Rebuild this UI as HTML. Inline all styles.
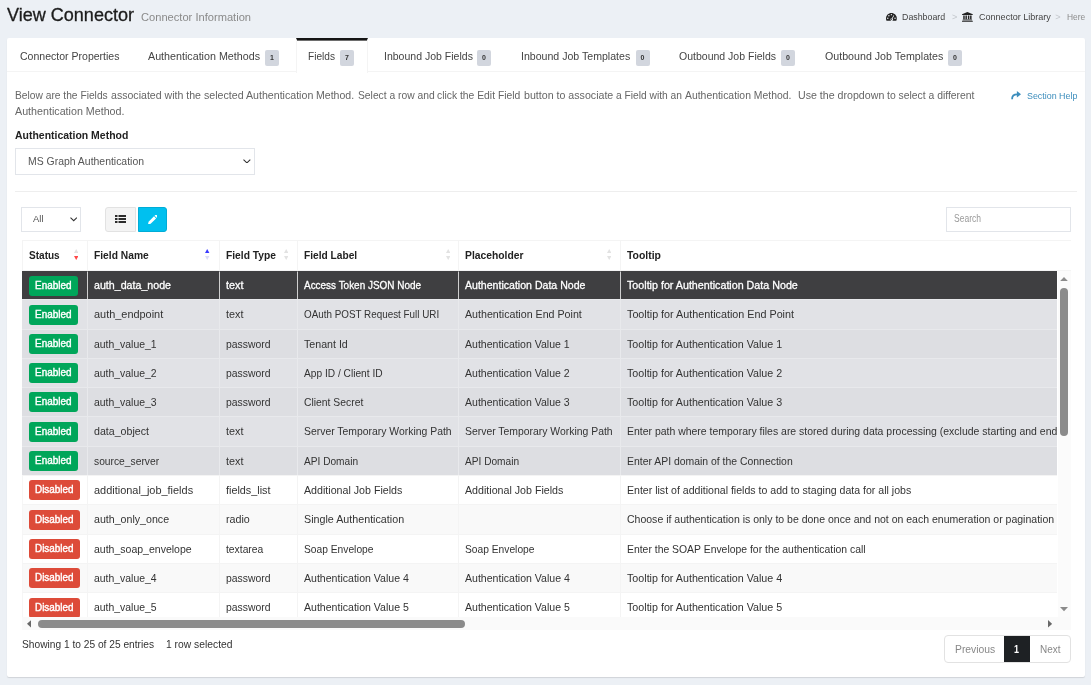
<!DOCTYPE html>
<html lang="en">
<head>
<meta charset="utf-8">
<title>View Connector</title>
<style>
*{box-sizing:border-box}
html,body{margin:0;padding:0}
body{width:1091px;height:685px;overflow:hidden;background:#ecf0f5;font-family:"Liberation Sans",sans-serif;font-size:11.5px;color:#333;position:relative}
.wrap{position:absolute;left:0;top:0;width:1091px;height:685px;will-change:transform}
.f{display:inline-block;transform-origin:0 50%;white-space:nowrap}
.t{position:absolute;line-height:16px;white-space:nowrap;margin:0;font-weight:400}
.card{position:absolute;left:7px;top:38px;width:1078px;height:639px;background:#fff;border-radius:2px;box-shadow:0 1px 1px rgba(0,0,0,.12)}
h1.t{font-size:17.6px;color:#1c1c1c;line-height:24px;-webkit-text-stroke:0.3px #1c1c1c}
.sub{color:#8a8a8a;font-size:11.6px}
.crumb{font-size:9.2px;color:#444}
.crumb .sep{color:#c3c7cc}
.tabline{position:absolute;left:7px;top:71px;width:1078px;height:1px;background:#f4f4f4}
.tabact{position:absolute;left:296px;top:38px;width:72px;height:35px;border-top:2px solid #151515;box-shadow:inset 0 1px 0 #6e6e6e;border-left:1px solid #f4f4f4;border-right:1px solid #f4f4f4;background:#fff}
.tab{color:#444}
.tb{position:absolute;top:50px;width:14px;height:16px;background:#d2d6de;color:#333;font-weight:700;font-size:7px;line-height:16px;text-align:center;border-radius:2px}
.desc{color:#666}
.help{color:#3c8dbc;font-size:9.8px}
.lab{font-weight:700;color:#222}
.box{position:absolute;border:1px solid #e2e5ea;background:#fff}
hr{position:absolute;left:15px;top:191px;width:1062px;height:1px;border:0;background:#eee;margin:0}
.btn{position:absolute;top:207px;height:25px}
.b1{left:105px;width:31px;background:#f4f4f4;border:1px solid #e2e2e2;border-radius:3px 0 0 3px}
.b2{left:138px;width:29px;background:#00c0ef;border:1px solid #00acd6;border-radius:0 3px 3px 0}
.thead{position:absolute;left:22px;top:240px;width:1049px;height:31px;border-top:1px solid #f4f4f4;border-left:1px solid #f4f4f4;border-bottom:1px solid #f4f4f4}
.thead div{position:absolute;top:0;height:29px;line-height:28px;font-weight:700;color:#222;border-right:1px solid #f4f4f4;white-space:nowrap}
.thead div .f{position:absolute;top:0}
.scroll{position:absolute;left:22px;top:271px;width:1035px;height:346px;overflow:hidden}
table{border-collapse:separate;table-layout:fixed;border-spacing:0;width:1420px}
td{padding:0 0 0 6px;white-space:nowrap;overflow:hidden;border-right:1px solid #f4f4f4;border-top:1px solid #f4f4f4;color:#333;vertical-align:middle;line-height:16px}
td:first-child{padding-left:7px}
tr.odd td:first-child,tr.even td:first-child{border-left:1px solid #f6f6f6;padding-left:6px}
td .f{position:relative;top:-0.5px}
tr.sel td{background:#3f3f41;color:#fff;-webkit-text-stroke:0.3px #fff;border-right-color:#d0d0d0;border-top-color:#3f3f41}
tr.en1 td{background:#e1e2e6;border-right-color:#e8e9ec;border-top-color:#e8e9ec}
tr.en2 td{background:#dddee2;border-right-color:#e8e9ec;border-top-color:#e8e9ec}
tr.odd td{background:#f9f9f9}
tr.even td{background:#fff}
.badge{position:relative;top:0;display:inline-block;width:49px;height:20px;line-height:20px;border-radius:3px;color:#fff;text-align:left;padding-left:6px;vertical-align:middle}
.badge .f{top:-1px;-webkit-text-stroke:0.4px #fff}
.bg-g{background:#00a65a}.bg-r{background:#dd4b39;width:51px}
.vsb{position:absolute;left:1058px;top:271px;width:13px;height:346px;background:#fbfbfb}
.hsb{position:absolute;left:22px;top:617px;width:1049px;height:13px;background:#fafafa}
.thumb{position:absolute;background:#8b8b8b;border-radius:4px}
.pag{position:absolute;left:944px;top:635px;height:28px;width:127px;border:1px solid #e2e2e2;border-radius:4px;background:#fff}
.pag .cur{position:absolute;left:59px;top:0;width:26px;height:26px;background:#1e2124}
svg{position:absolute;display:block}
</style>
</head>
<body>
<div class="wrap">
<h1 class="t" style="left:7px;top:3px"><span class="f" style="transform:scaleX(1.0251);font-size:17.6px;">View Connector</span></h1>
<div class="t sub" style="left:141px;top:9px"><span class="f" style="transform:scaleX(0.9589);font-size:11.6px;">Connector Information</span></div>
<div class="t crumb" style="left:902.4px;top:9px"><span class="f" style="transform:scaleX(0.9610);font-size:9.2px;">Dashboard</span></div>
<div class="t crumb" style="left:952px;top:9px"><span class="sep">&gt;</span></div>
<div class="t crumb" style="left:979.4px;top:9px"><span class="f" style="transform:scaleX(0.9845);font-size:9.2px;">Connector Library</span></div>
<div class="t crumb" style="left:1055.3px;top:9px"><span class="sep">&gt;</span></div>
<div class="t crumb" style="left:1066.5px;top:9px;color:#8c8c8c"><span class="f" style="transform:scaleX(0.9136);font-size:9.2px;">Here</span></div>
<div class="card"></div>
<div class="tabline"></div>
<div class="tabact"></div>
<div class="t tab" style="left:19.5px;top:48px"><span class="f" style="transform:scaleX(0.9156);">Connector Properties</span></div>
<div class="t tab" style="left:148px;top:48px"><span class="f" style="transform:scaleX(0.9318);">Authentication Methods</span></div><span class="tb" style="left:265px">1</span>
<div class="t tab" style="left:308.3px;top:48px"><span class="f" style="transform:scaleX(0.8798);">Fields</span></div><span class="tb" style="left:340px">7</span>
<div class="t tab" style="left:383.7px;top:48px"><span class="f" style="transform:scaleX(0.9147);">Inbound Job Fields</span></div><span class="tb" style="left:477px">0</span>
<div class="t tab" style="left:521.2px;top:48px"><span class="f" style="transform:scaleX(0.9198);">Inbound Job Templates</span></div><span class="tb" style="left:635.5px">0</span>
<div class="t tab" style="left:679.1px;top:48px"><span class="f" style="transform:scaleX(0.9140);">Outbound Job Fields</span></div><span class="tb" style="left:781px">0</span>
<div class="t tab" style="left:824.5px;top:48px"><span class="f" style="transform:scaleX(0.9267);">Outbound Job Templates</span></div><span class="tb" style="left:948px">0</span>
<p class="t desc" style="left:0;top:87px;width:1000px;height:16px"><span style="position:absolute;left:15.4px;top:0"><span class="f" style="transform:scaleX(0.8896);">Below are the Fields</span></span> <span style="position:absolute;left:111px;top:0"><span class="f" style="transform:scaleX(0.9201);">associated with the</span></span> <span style="position:absolute;left:203.9px;top:0"><span class="f" style="transform:scaleX(0.9241);">selected Authentication</span></span> <span style="position:absolute;left:316.1px;top:0"><span class="f" style="transform:scaleX(0.9167);">Method.</span></span> <span style="position:absolute;left:357.8px;top:0"><span class="f" style="transform:scaleX(0.8953);">Select a row and</span></span> <span style="position:absolute;left:437.4px;top:0"><span class="f" style="transform:scaleX(0.8987);">click the Edit Field</span></span> <span style="position:absolute;left:523.6px;top:0"><span class="f" style="transform:scaleX(0.9249);">button to associate</span></span> <span style="position:absolute;left:615.8px;top:0"><span class="f" style="transform:scaleX(0.8900);">a Field with an</span></span> <span style="position:absolute;left:684.7px;top:0"><span class="f" style="transform:scaleX(0.9044);">Authentication Method.</span></span> <span style="position:absolute;left:797.6px;top:0"><span class="f" style="transform:scaleX(0.9245);">Use the dropdown</span></span> <span style="position:absolute;left:886.8px;top:0"><span class="f" style="transform:scaleX(0.9024);">to select a different</span></span></p>
<p class="t desc" style="left:15px;top:103px"><span class="f" style="transform:scaleX(0.9308);">Authentication Method.</span></p>
<a class="t help" style="left:1026.6px;top:88px"><span class="f" style="transform:scaleX(0.9071);font-size:9.8px;">Section Help</span></a>
<label class="t lab" style="left:15px;top:127px"><span class="f" style="transform:scaleX(0.9095);font-weight:700;">Authentication Method</span></label>
<div class="box" style="left:15px;top:148px;width:240px;height:27px"></div>
<div class="t" style="left:28.2px;top:152.8px;color:#555"><span class="f" style="transform:scaleX(0.9072);">MS Graph Authentication</span></div>
<hr>
<div class="box" style="left:21px;top:207px;width:60px;height:25px"></div>
<div class="t" style="left:32.5px;top:210.7px;color:#555;font-size:9.4px"><span class="f" style="transform:scaleX(1.0075);font-size:9.4px;">All</span></div>
<div class="btn b1"></div>
<div class="btn b2"></div>
<div class="box" style="left:946px;top:207px;width:125px;height:25px"></div>
<div class="t" style="left:954.4px;top:211px;color:#9a9a9a;font-size:10px"><span class="f" style="transform:scaleX(0.8521);font-size:10.0px;">Search</span></div>
<div class="thead">
  <div style="left:0;width:65px"><span style="position:absolute;left:5.5px"><span class="f" style="transform:scaleX(0.8732);font-weight:700;">Status</span></span></div>
  <div style="left:65px;width:132px"><span style="position:absolute;left:5.7px"><span class="f" style="transform:scaleX(0.8915);font-weight:700;">Field Name</span></span></div>
  <div style="left:197px;width:78px"><span style="position:absolute;left:5.7px"><span class="f" style="transform:scaleX(0.8924);font-weight:700;">Field Type</span></span></div>
  <div style="left:275px;width:161px"><span style="position:absolute;left:6px"><span class="f" style="transform:scaleX(0.8855);font-weight:700;">Field Label</span></span></div>
  <div style="left:436px;width:162px"><span style="position:absolute;left:6.2px"><span class="f" style="transform:scaleX(0.8972);font-weight:700;">Placeholder</span></span></div>
  <div style="left:598px;width:450px;border-right:0"><span style="position:absolute;left:5.7px"><span class="f" style="transform:scaleX(0.9074);font-weight:700;">Tooltip</span></span></div>
</div>
<div class="scroll">
  <table>
    <colgroup><col style="width:66px"><col style="width:132px"><col style="width:78px"><col style="width:161px"><col style="width:162px"><col></colgroup>
    <tbody>
<tr class="sel" style="height:28px"><td class="c0"><span class="badge bg-g"><span class="f" style="transform:scaleX(0.9385);font-size:10.6px;">Enabled</span></span></td><td><span class="f" style="transform:scaleX(0.9261);">auth_data_node</span></td><td><span class="f" style="transform:scaleX(0.9382);">text</span></td><td><span class="f" style="transform:scaleX(0.8648);">Access Token JSON Node</span></td><td><span class="f" style="transform:scaleX(0.9186);">Authentication Data Node</span></td><td><span class="f" style="transform:scaleX(0.9309);">Tooltip for Authentication Data Node</span></td></tr>
<tr class="en1" style="height:30px"><td class="c0"><span class="badge bg-g"><span class="f" style="transform:scaleX(0.9385);font-size:10.6px;">Enabled</span></span></td><td><span class="f" style="transform:scaleX(0.9492);">auth_endpoint</span></td><td><span class="f" style="transform:scaleX(0.9382);">text</span></td><td><span class="f" style="transform:scaleX(0.8576);">OAuth POST Request Full URI</span></td><td><span class="f" style="transform:scaleX(0.9273);">Authentication End Point</span></td><td><span class="f" style="transform:scaleX(0.9362);">Tooltip for Authentication End Point</span></td></tr>
<tr class="en2" style="height:29px"><td class="c0"><span class="badge bg-g"><span class="f" style="transform:scaleX(0.9385);font-size:10.6px;">Enabled</span></span></td><td><span class="f" style="transform:scaleX(0.9064);">auth_value_1</span></td><td><span class="f" style="transform:scaleX(0.9041);">password</span></td><td><span class="f" style="transform:scaleX(0.9255);">Tenant Id</span></td><td><span class="f" style="transform:scaleX(0.9165);">Authentication Value 1</span></td><td><span class="f" style="transform:scaleX(0.9313);">Tooltip for Authentication Value 1</span></td></tr>
<tr class="en1" style="height:29px"><td class="c0"><span class="badge bg-g"><span class="f" style="transform:scaleX(0.9385);font-size:10.6px;">Enabled</span></span></td><td><span class="f" style="transform:scaleX(0.9064);">auth_value_2</span></td><td><span class="f" style="transform:scaleX(0.9041);">password</span></td><td><span class="f" style="transform:scaleX(0.8847);">App ID / Client ID</span></td><td><span class="f" style="transform:scaleX(0.9165);">Authentication Value 2</span></td><td><span class="f" style="transform:scaleX(0.9313);">Tooltip for Authentication Value 2</span></td></tr>
<tr class="en2" style="height:29px"><td class="c0"><span class="badge bg-g"><span class="f" style="transform:scaleX(0.9385);font-size:10.6px;">Enabled</span></span></td><td><span class="f" style="transform:scaleX(0.9064);">auth_value_3</span></td><td><span class="f" style="transform:scaleX(0.9041);">password</span></td><td><span class="f" style="transform:scaleX(0.9006);">Client Secret</span></td><td><span class="f" style="transform:scaleX(0.9165);">Authentication Value 3</span></td><td><span class="f" style="transform:scaleX(0.9313);">Tooltip for Authentication Value 3</span></td></tr>
<tr class="en1" style="height:30px"><td class="c0"><span class="badge bg-g"><span class="f" style="transform:scaleX(0.9385);font-size:10.6px;">Enabled</span></span></td><td><span class="f" style="transform:scaleX(0.9249);">data_object</span></td><td><span class="f" style="transform:scaleX(0.9382);">text</span></td><td><span class="f" style="transform:scaleX(0.9044);">Server Temporary Working Path</span></td><td><span class="f" style="transform:scaleX(0.9044);">Server Temporary Working Path</span></td><td><span class="f" style="transform:scaleX(0.9096);">Enter path where temporary files are stored during data processing (exclude starting and ending slashes)</span></td></tr>
<tr class="en2" style="height:29px"><td class="c0"><span class="badge bg-g"><span class="f" style="transform:scaleX(0.9385);font-size:10.6px;">Enabled</span></span></td><td><span class="f" style="transform:scaleX(0.8933);">source_server</span></td><td><span class="f" style="transform:scaleX(0.9382);">text</span></td><td><span class="f" style="transform:scaleX(0.8817);">API Domain</span></td><td><span class="f" style="transform:scaleX(0.8817);">API Domain</span></td><td><span class="f" style="transform:scaleX(0.9062);">Enter API domain of the Connection</span></td></tr>
<tr class="even" style="height:29px"><td class="c0"><span class="badge bg-r"><span class="f" style="transform:scaleX(0.9337);font-size:10.6px;">Disabled</span></span></td><td><span class="f" style="transform:scaleX(0.9509);">additional_job_fields</span></td><td><span class="f" style="transform:scaleX(0.9406);">fields_list</span></td><td><span class="f" style="transform:scaleX(0.9263);">Additional Job Fields</span></td><td><span class="f" style="transform:scaleX(0.9263);">Additional Job Fields</span></td><td><span class="f" style="transform:scaleX(0.9185);">Enter list of additional fields to add to staging data for all jobs</span></td></tr>
<tr class="odd" style="height:30px"><td class="c0"><span class="badge bg-r"><span class="f" style="transform:scaleX(0.9337);font-size:10.6px;">Disabled</span></span></td><td><span class="f" style="transform:scaleX(0.9247);">auth_only_once</span></td><td><span class="f" style="transform:scaleX(0.9305);">radio</span></td><td><span class="f" style="transform:scaleX(0.9318);">Single Authentication</span></td><td></td><td><span class="f" style="transform:scaleX(0.9138);">Choose if authentication is only to be done once and not on each enumeration or pagination</span></td></tr>
<tr class="even" style="height:29px"><td class="c0"><span class="badge bg-r"><span class="f" style="transform:scaleX(0.9337);font-size:10.6px;">Disabled</span></span></td><td><span class="f" style="transform:scaleX(0.9139);">auth_soap_envelope</span></td><td><span class="f" style="transform:scaleX(0.8974);">textarea</span></td><td><span class="f" style="transform:scaleX(0.8908);">Soap Envelope</span></td><td><span class="f" style="transform:scaleX(0.8908);">Soap Envelope</span></td><td><span class="f" style="transform:scaleX(0.9044);">Enter the SOAP Envelope for the authentication call</span></td></tr>
<tr class="odd" style="height:29px"><td class="c0"><span class="badge bg-r"><span class="f" style="transform:scaleX(0.9337);font-size:10.6px;">Disabled</span></span></td><td><span class="f" style="transform:scaleX(0.9064);">auth_value_4</span></td><td><span class="f" style="transform:scaleX(0.9041);">password</span></td><td><span class="f" style="transform:scaleX(0.9183);">Authentication Value 4</span></td><td><span class="f" style="transform:scaleX(0.9183);">Authentication Value 4</span></td><td><span class="f" style="transform:scaleX(0.9313);">Tooltip for Authentication Value 4</span></td></tr>
<tr class="even" style="height:30px"><td class="c0"><span class="badge bg-r"><span class="f" style="transform:scaleX(0.9337);font-size:10.6px;">Disabled</span></span></td><td><span class="f" style="transform:scaleX(0.9064);">auth_value_5</span></td><td><span class="f" style="transform:scaleX(0.9041);">password</span></td><td><span class="f" style="transform:scaleX(0.9183);">Authentication Value 5</span></td><td><span class="f" style="transform:scaleX(0.9183);">Authentication Value 5</span></td><td><span class="f" style="transform:scaleX(0.9313);">Tooltip for Authentication Value 5</span></td></tr>
    </tbody>
  </table>
</div>
<div class="vsb"></div>
<div class="hsb"></div>
<div class="thumb" style="left:1060px;top:288px;width:8px;height:148px"></div>
<div class="thumb" style="left:38px;top:620px;width:427px;height:8px"></div>
<div class="t" style="left:22px;top:636px"><span class="f" style="transform:scaleX(0.8861);">Showing 1 to 25 of 25 entries</span></div>
<div class="t" style="left:166px;top:636px"><span class="f" style="transform:scaleX(0.8968);">1 row selected</span></div>
<div class="pag"><div class="cur"></div></div>
<div class="t" style="left:954.8px;top:641px;color:#888"><span class="f" style="transform:scaleX(0.9006);">Previous</span></div>
<div class="t" style="left:1014.3px;top:641px;color:#fff;font-weight:700"><span class="f" style="transform:scaleX(0.8989);font-size:10.0px;font-weight:700;">1</span></div>
<div class="t" style="left:1039.7px;top:641px;color:#888"><span class="f" style="transform:scaleX(0.8666);">Next</span></div>

<!-- icons -->
<svg style="left:886.2px;top:13px" width="10.8" height="7.9" viewBox="0 0 28 20"><path d="M14 0C6.3 0 0 6.3 0 14c0 2.1.5 4.2 1.4 6h25.2c.9-1.800 1.400-3.900 1.400-6C28 6.300 21.700 0 14 0z" fill="#222"/><circle cx="4.600" cy="13.500" r="1.900" fill="#ecf0f5"/><circle cx="7.500" cy="6.800" r="1.900" fill="#ecf0f5"/><circle cx="14" cy="4" r="1.900" fill="#ecf0f5"/><circle cx="23.400" cy="13.500" r="1.900" fill="#ecf0f5"/><path d="M19.500 5.500l1.800.900-4.200 8.200a3.200 3.200 0 1 1-1.800-.900z" fill="#ecf0f5"/><circle cx="14.200" cy="15.800" r="1.500" fill="#222"/></svg>
<svg style="left:962.3px;top:12px" width="10.8" height="9.8" viewBox="0 0 22 20"><path d="M11 0l11 4.500V6H0V4.500z" fill="#222"/><path d="M2.500 7h3v8h-3zM7 7h3v8H7zM12 7h3v8h-3zM16.500 7h3v8h-3z" fill="#222"/><path d="M1.500 15.500h19V17h-19zM0 17.700h22V20H0z" fill="#222"/></svg>
<svg style="left:1010.6px;top:91.3px" width="10" height="8.600" viewBox="0 0 20 17.200"><path d="M2.200 16.500C1.800 9.500 5.500 6.600 12.600 6.600" fill="none" stroke="#3c8dbc" stroke-width="3.600"/><path d="M11.800 0L20 6.600l-8.200 6.600z" fill="#3c8dbc"/></svg>
<svg style="left:243.400px;top:158.600px" width="7.800" height="4.800" viewBox="0 0 7.800 4.800"><path d="M.5.600l3.400 3.300L7.300.6" fill="none" stroke="#333" stroke-width="1.050"/></svg>
<svg style="left:69.800px;top:217px" width="7.400" height="4.600" viewBox="0 0 7.400 4.600"><path d="M.5.600l3.200 3.100L6.900.6" fill="none" stroke="#333" stroke-width="1.050"/></svg>
<svg style="left:115px;top:215px" width="11" height="8" viewBox="0 0 11 8"><path d="M0 0h2.500v2H0zM3.500 0H11v2H3.500zM0 3h2.500v2H0zM3.500 3H11v2H3.500zM0 6h2.500v2H0zM3.500 6H11v2H3.500z" fill="#2b2b2b"/></svg>
<svg style="left:147.600px;top:214.700px" width="9.400" height="9.400" viewBox="0 0 20 20"><path d="M0 20l1.200-5.600L12.800 2.800l4.400 4.400L5.600 18.800zM14 1.600L15.600 0c.8-.8 2-.8 2.800 0l1.600 1.600c.8.800.8 2 0 2.800L18.400 6z" fill="#fff"/></svg>
<svg style="left:73.9px;top:249px" width="4.400" height="11.200" viewBox="0 0 4.400 11.200"><path d="M2.200 0l2.200 3.900H0z" fill="#e2e2e2"/><path d="M0 7l4.400 0L2.200 11.100z" fill="#ff4848"/></svg>
<svg style="left:205.4px;top:249px" width="4.400" height="11.200" viewBox="0 0 4.400 11.200"><path d="M2.200 0l2.200 3.900H0z" fill="#3a3aff"/><path d="M0 7l4.400 0L2.200 11.100z" fill="#dcdcf5"/></svg>
<svg style="left:284px;top:249px" width="4.400" height="11.200" viewBox="0 0 4.400 11.200"><path d="M2.200 0l2.200 3.900H0z" fill="#e2e2e2"/><path d="M0 7l4.400 0L2.200 11.100z" fill="#e2e2e2"/></svg>
<svg style="left:445.5px;top:249px" width="4.400" height="11.200" viewBox="0 0 4.400 11.200"><path d="M2.200 0l2.200 3.900H0z" fill="#e2e2e2"/><path d="M0 7l4.400 0L2.200 11.100z" fill="#e2e2e2"/></svg>
<svg style="left:606.7px;top:249px" width="4.400" height="11.200" viewBox="0 0 4.400 11.200"><path d="M2.200 0l2.200 3.900H0z" fill="#e2e2e2"/><path d="M0 7l4.400 0L2.200 11.100z" fill="#e2e2e2"/></svg>
<svg style="left:1060.2px;top:276.700px" width="8" height="4.200" viewBox="0 0 8 4.200"><path d="M4 0l4 4.200H0z" fill="#8b8b8b"/></svg>
<svg style="left:1060.2px;top:607.400px" width="8" height="4.200" viewBox="0 0 8 4.200"><path d="M0 0h8L4 4.200z" fill="#8b8b8b"/></svg>
<svg style="left:27px;top:620px" width="4.200" height="7.600" viewBox="0 0 4.200 7.600"><path d="M4.200 0v7.600L0 3.800z" fill="#686868"/></svg>
<svg style="left:1048.300px;top:620px" width="4.200" height="7.600" viewBox="0 0 4.200 7.600"><path d="M0 0v7.600l4.200-3.800z" fill="#686868"/></svg>
</div>
</body>
</html>
